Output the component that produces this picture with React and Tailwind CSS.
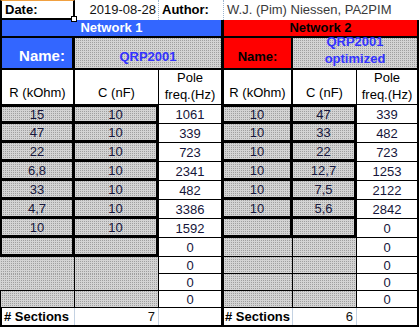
import React from "react";

const G =
  "bg-[#d4d4d4] bg-[image:conic-gradient(#a0a0a0_25%,#d4d4d4_0%)] bg-[length:2px_2px]";
const NUM = "text-[#15153a]";

const net1 = [
  ["15", "10", "1061"],
  ["47", "10", "339"],
  ["22", "10", "723"],
  ["6,8", "10", "2341"],
  ["33", "10", "482"],
  ["4,7", "10", "3386"],
  ["10", "10", "1592"],
  ["", "", "0"],
  ["", "", "0"],
  ["", "", "0"],
  ["", "", "0"],
];
const net2 = [
  ["10", "47", "339"],
  ["10", "33", "482"],
  ["10", "22", "723"],
  ["10", "12,7", "1253"],
  ["10", "7,5", "2122"],
  ["10", "5,6", "2842"],
  ["", "", "0"],
  ["", "", "0"],
  ["", "", "0"],
  ["", "", "0"],
  ["", "", "0"],
];

function aCls(i) {
  if (i < 8)
    return (
      G +
      " border-l-2 border-r-[3px] border-b-[3px] border-black" +
      (i === 0 ? " border-t-2" : "")
    );
  if (i === 8) return G + " border-r border-black";
  if (i === 9) return G + " border-r border-b border-black";
  return G + " border-l border-r border-b border-black";
}
function bCls(i) {
  if (i < 8)
    return (
      G +
      " border-r-[3px] border-b-[3px] border-black" +
      (i === 0 ? " border-t-2" : "")
    );
  if (i === 8) return G + " border-r border-black";
  return G + " border-r border-b border-black";
}
function dCls(i) {
  if (i < 7)
    return (
      G +
      " border-r-[3px] border-b-[3px] border-black" +
      (i === 0 ? " border-t-2" : "")
    );
  return G + " border-r border-b border-black";
}

export default function App() {
  const cell = "flex items-center justify-center text-[13px] leading-none";
  return (
    <div className="w-[419px] h-[328px] bg-white overflow-hidden font-['Liberation_Sans',Arial,sans-serif] text-black">
      <div className="grid grid-cols-[75px_84px_65px_69px_64px_62px] grid-rows-[20px_18px_32px_35px_19px_19px_19px_19px_19px_19px_19px_19px_17px_17px_17px_17px_2px]">
        {/* Row 1 */}
        <div className="relative flex items-center pl-[3px] text-[13px] font-bold border-2 border-black border-t border-t-[#f0a040]">
          Date:
          <div className="absolute -right-[4px] -bottom-[4px] w-[6px] h-[6px] bg-white border border-black" />
        </div>
        <div className="flex items-center justify-end pr-[2px] text-[13px] text-[#111] border-r border-dotted border-[#9fb6cf]">
          2019-08-28
        </div>
        <div className="flex items-center pl-[3px] text-[13px] font-bold border-r border-dotted border-[#9fb6cf]">
          Author:
        </div>
        <div className="col-span-3 flex items-center pl-[3px] text-[13px] text-[#3a3a3a]">
          W.J. (Pim) Niessen, PA2PIM
        </div>

        {/* Row 2 */}
        <div className="col-span-3 flex items-center justify-center bg-[#3366ff] text-white font-bold text-[13px] border-l-2 border-b-2 border-r-[3px] border-black">
          Network 1
        </div>
        <div className="col-span-3 flex items-center justify-center bg-[#ff0000] text-black font-bold text-[13px] border-b-2 border-r-2 border-black">
          Network 2
        </div>

        {/* Row 3 */}
        <div className="flex items-end justify-center pl-[10px] pb-[1px] bg-[#3366ff] text-white font-bold text-[15px] border-l-2 border-r-[3px] border-b-2 border-black">
          Name:
        </div>
        <div
          className={
            "col-span-2 flex items-end justify-center pb-[2px] text-[#3333ff] font-bold text-[13px] border-r-[3px] border-b-2 border-black " +
            G
          }
        >
          QRP2001
        </div>
        <div className="flex items-end justify-center pb-[2px] bg-[#ff0000] text-black font-bold text-[13px] border-r-2 border-b-2 border-black">
          Name:
        </div>
        <div
          className={
            "col-span-2 flex flex-col items-center justify-end pb-[1px] leading-[17px] text-[#3333ff] font-bold text-[13px] border-r-2 border-b-2 border-black " +
            G
          }
        >
          <span>QRP2001</span>
          <span>optimized</span>
        </div>

        {/* Row 4 headers */}
        <div className="flex items-end justify-center pb-[2px] text-[13px] border-l-2 border-r-2 border-b border-black">
          R (kOhm)
        </div>
        <div className="flex items-end justify-center pb-[2px] text-[13px] border-r border-b border-black">
          C (nF)
        </div>
        <div className="flex flex-col items-center justify-end pb-[1px] leading-[17px] text-[13px] border-r-[3px] border-b border-black">
          <span>Pole</span>
          <span>freq.(Hz)</span>
        </div>
        <div className="flex items-end justify-center pb-[2px] text-[13px] border-r-2 border-b border-black">
          R (kOhm)
        </div>
        <div className="flex items-end justify-center pb-[2px] text-[13px] border-r border-b border-black">
          C (nF)
        </div>
        <div className="flex flex-col items-center justify-end pb-[1px] leading-[17px] text-[13px] border-r-2 border-b border-black">
          <span>Pole</span>
          <span>freq.(Hz)</span>
        </div>

        {/* Data rows */}
        {net1.map((r1, i) => {
          const r2 = net2[i];
          return (
            <React.Fragment key={i}>
              <div className={cell + " " + NUM + " " + aCls(i)}>{r1[0]}</div>
              <div className={cell + " " + NUM + " " + bCls(i)}>{r1[1]}</div>
              <div
                className={
                  cell +
                  " " +
                  NUM +
                  " bg-white border-r-[3px] border-b border-black"
                }
              >
                {r1[2]}
              </div>
              <div className={cell + " " + NUM + " " + dCls(i)}>{r2[0]}</div>
              <div className={cell + " " + NUM + " " + dCls(i)}>{r2[1]}</div>
              <div
                className={
                  cell + " " + NUM + " bg-white border-r-2 border-b border-black"
                }
              >
                {r2[2]}
              </div>
            </React.Fragment>
          );
        })}

        {/* Sections row */}
        <div className="flex items-center pl-[2px] whitespace-nowrap text-[13px] font-bold border-l-2 border-r border-l-black border-r-[#c4d2e2]">
          # Sections
        </div>
        <div className="flex items-center justify-end pr-[3px] text-[13px] text-[#111] border-r border-[#c4d2e2]">
          7
        </div>
        <div className="border-r-[3px] border-black" />
        <div className="flex items-center pl-[1px] whitespace-nowrap overflow-visible text-[13px] font-bold border-r border-[#c4d2e2]">
          # Sections
        </div>
        <div className="flex items-center justify-end pr-[3px] text-[13px] text-[#111] border-r border-[#c4d2e2]">
          6
        </div>
        <div className="border-r-2 border-black" />

        {/* Bottom border */}
        <div className="col-span-6 bg-black" />
      </div>
    </div>
  );
}
